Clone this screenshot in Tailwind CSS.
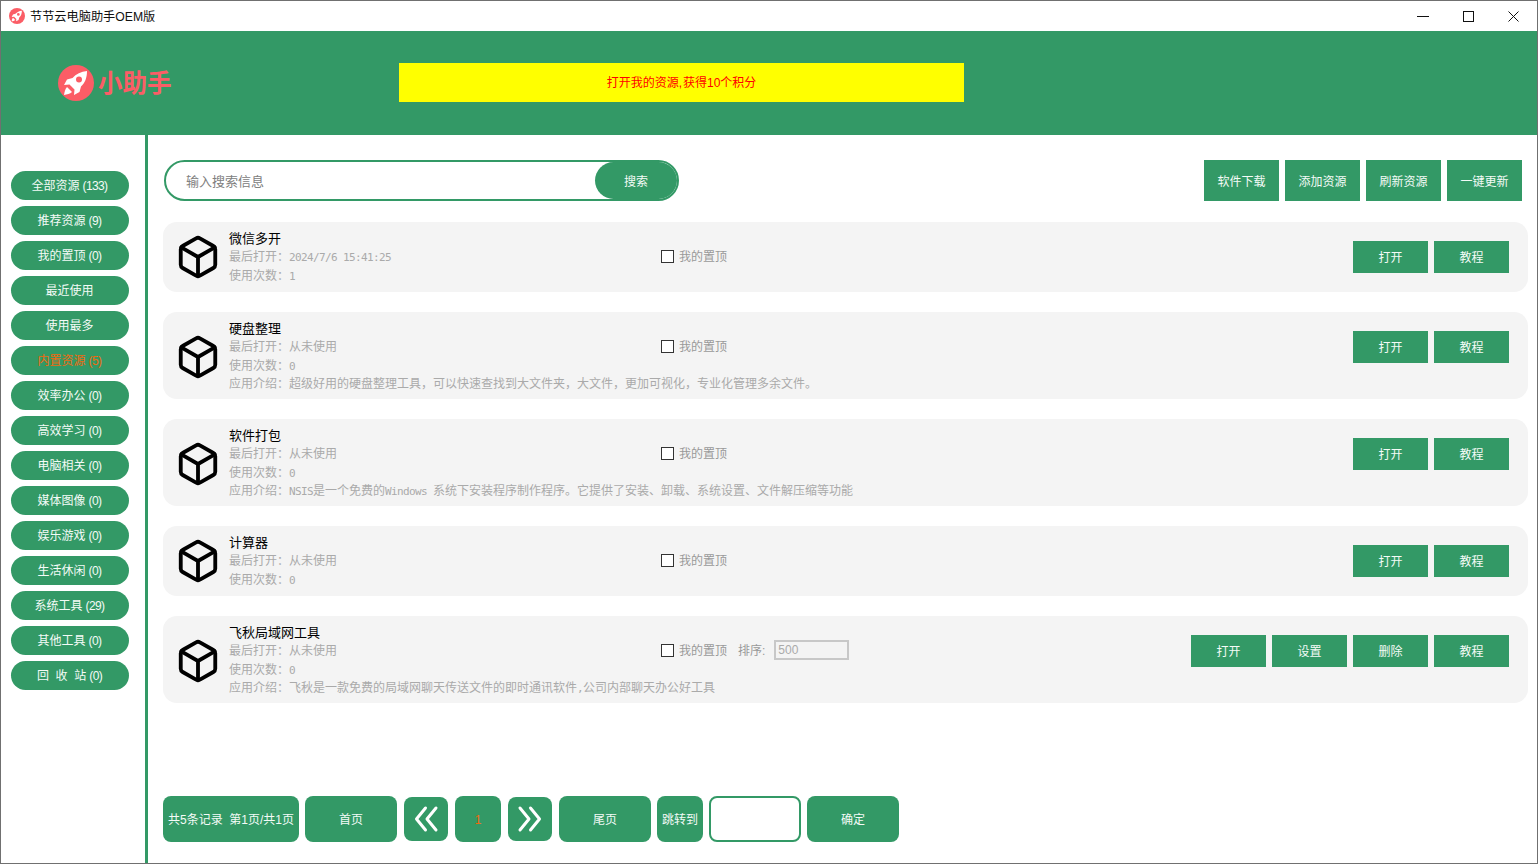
<!DOCTYPE html>
<html lang="zh">
<head>
<meta charset="utf-8">
<title>节节云电脑助手OEM版</title>
<script src="https://cdn.jsdelivr.net/npm/@tailwindcss/browser@4"></script>
</head>
<body class="bg-white">
<div class="w-[1538px] h-[864px] box-border border border-[#707070] flex flex-col overflow-hidden bg-white text-[12px] leading-[18px] font-['Liberation_Sans','Noto_Sans_CJK_SC',sans-serif]">

  <!-- title bar -->
  <div class="h-[30px] shrink-0 flex items-center pl-[8px] text-[#111]">
    <svg class="w-[16px] h-[16px] shrink-0" viewBox="0 0 36 36"><circle cx="18" cy="18" r="18" fill="#fb5d66"/><path d="M29 6C23 6.500 18 9 14.500 13L9 14.500 6 20 11.500 19.500 16.500 24.500 16 30 21.500 27 23 21.500C27 18 29 12.500 29 6Z" fill="#fff"/><circle cx="21" cy="14.500" r="3" fill="#fb5d66"/><path d="M9 22C7 24 6.500 27 6 30 9 29.500 12 29 14 27Z" fill="#fff"/></svg>
    <span class="ml-[5px] text-[12.200px] pt-[1px]">节节云电脑助手OEM版</span>
    <div class="ml-auto flex items-center pr-[18px] gap-[34px]">
      <svg class="w-[12px] h-[12px]" viewBox="0 0 12 12"><path d="M0 6.500H12" stroke="#111" stroke-width="1"/></svg>
      <svg class="w-[11px] h-[11px]" viewBox="0 0 11 11"><rect x=".5" y=".5" width="10" height="10" fill="none" stroke="#111"/></svg>
      <svg class="w-[11px] h-[11px]" viewBox="0 0 11 11"><path d="M.5.500 10.500 10.500M10.500.500.500 10.500" stroke="#111" stroke-width="1"/></svg>
    </div>
  </div>

  <!-- header -->
  <div class="h-[104px] shrink-0 bg-[#339966] flex items-center">
    <svg class="ml-[57px] w-[36px] h-[36px] shrink-0" viewBox="0 0 36 36"><circle cx="18" cy="18" r="18" fill="#fb5d66"/><path d="M29 6C23 6.500 18 9 14.500 13L9 14.500 6 20 11.500 19.500 16.500 24.500 16 30 21.500 27 23 21.500C27 18 29 12.500 29 6Z" fill="#fff"/><circle cx="21" cy="14.500" r="3" fill="#fb5d66"/><path d="M9 22C7 24 6.500 27 6 30 9 29.500 12 29 14 27Z" fill="#fff"/></svg>
    <span class="ml-[4px] w-[75px] text-[24.500px] leading-[30px] font-bold text-[#fb5d66] pt-[2px] whitespace-nowrap">小助手</span>
    <div class="ml-[226px] w-[565px] h-[39px] mb-[2px] pt-[2px] bg-[#ffff00] text-[#ff0000] flex items-center justify-center"><span>打开我的资源,<span class="ml-[1px]">获得10个积分</span></span></div>
  </div>

  <div class="flex flex-1 min-h-0">
    <!-- sidebar -->
    <div class="w-[147px] shrink-0 border-r-[3px] border-[#339966] pt-[36px] pl-[10px] flex flex-col gap-[6px] text-[#f4fbf7]">
      <div class="w-[118px] h-[29px] pr-[1px] shrink-0 rounded-[14.500px] bg-[#339966] flex items-center justify-center whitespace-pre">全部资源<span class="ml-[3px] tracking-[-0.600px]">(133)</span></div>
      <div class="w-[118px] h-[29px] pr-[1px] shrink-0 rounded-[14.500px] bg-[#339966] flex items-center justify-center whitespace-pre">推荐资源<span class="ml-[3px] tracking-[-0.600px]">(9)</span></div>
      <div class="w-[118px] h-[29px] pr-[1px] shrink-0 rounded-[14.500px] bg-[#339966] flex items-center justify-center whitespace-pre">我的置顶<span class="ml-[3px] tracking-[-0.600px]">(0)</span></div>
      <div class="w-[118px] h-[29px] pr-[1px] shrink-0 rounded-[14.500px] bg-[#339966] flex items-center justify-center">最近使用</div>
      <div class="w-[118px] h-[29px] pr-[1px] shrink-0 rounded-[14.500px] bg-[#339966] flex items-center justify-center">使用最多</div>
      <div class="w-[118px] h-[29px] pr-[1px] shrink-0 rounded-[14.500px] bg-[#339966] flex items-center justify-center whitespace-pre text-[#f06a10]">内置资源<span class="ml-[3px] tracking-[-0.600px]">(5)</span></div>
      <div class="w-[118px] h-[29px] pr-[1px] shrink-0 rounded-[14.500px] bg-[#339966] flex items-center justify-center whitespace-pre">效率办公<span class="ml-[3px] tracking-[-0.600px]">(0)</span></div>
      <div class="w-[118px] h-[29px] pr-[1px] shrink-0 rounded-[14.500px] bg-[#339966] flex items-center justify-center whitespace-pre">高效学习<span class="ml-[3px] tracking-[-0.600px]">(0)</span></div>
      <div class="w-[118px] h-[29px] pr-[1px] shrink-0 rounded-[14.500px] bg-[#339966] flex items-center justify-center whitespace-pre">电脑相关<span class="ml-[3px] tracking-[-0.600px]">(0)</span></div>
      <div class="w-[118px] h-[29px] pr-[1px] shrink-0 rounded-[14.500px] bg-[#339966] flex items-center justify-center whitespace-pre">媒体图像<span class="ml-[3px] tracking-[-0.600px]">(0)</span></div>
      <div class="w-[118px] h-[29px] pr-[1px] shrink-0 rounded-[14.500px] bg-[#339966] flex items-center justify-center whitespace-pre">娱乐游戏<span class="ml-[3px] tracking-[-0.600px]">(0)</span></div>
      <div class="w-[118px] h-[29px] pr-[1px] shrink-0 rounded-[14.500px] bg-[#339966] flex items-center justify-center whitespace-pre">生活休闲<span class="ml-[3px] tracking-[-0.600px]">(0)</span></div>
      <div class="w-[118px] h-[29px] pr-[1px] shrink-0 rounded-[14.500px] bg-[#339966] flex items-center justify-center whitespace-pre">系统工具<span class="ml-[3px] tracking-[-0.600px]">(29)</span></div>
      <div class="w-[118px] h-[29px] pr-[1px] shrink-0 rounded-[14.500px] bg-[#339966] flex items-center justify-center whitespace-pre">其他工具<span class="ml-[3px] tracking-[-0.600px]">(0)</span></div>
      <div class="w-[118px] h-[29px] pr-[1px] shrink-0 rounded-[14.500px] bg-[#339966] flex items-center justify-center whitespace-pre">回  收  站<span class="ml-[3px] tracking-[-0.600px]">(0)</span></div>
    </div>

    <!-- main -->
    <div class="flex-1 min-w-0 flex flex-col pt-[25px] pl-[15px] pr-[9px]">
      <!-- toolbar -->
      <div class="h-[41px] shrink-0 flex items-center pl-[1px] pr-[6px]">
        <div class="w-[515px] h-[41px] box-border border-2 border-[#339966] rounded-full flex items-center pl-[20px]">
          <span class="text-[13px] text-[#808080] flex-1 pt-[2px]">输入搜索信息</span>
          <div class="w-[82px] h-[37px] pt-[2px] bg-[#339966] rounded-full text-[#f4fbf7] flex items-center justify-center">搜索</div>
        </div>
        <div class="ml-auto flex gap-[6px] text-[#f4fbf7]">
          <div class="w-[75px] h-[41px] pt-[2px] bg-[#339966] flex items-center justify-center">软件下载</div>
          <div class="w-[75px] h-[41px] pt-[2px] bg-[#339966] flex items-center justify-center">添加资源</div>
          <div class="w-[75px] h-[41px] pt-[2px] bg-[#339966] flex items-center justify-center">刷新资源</div>
          <div class="w-[75px] h-[41px] pt-[2px] bg-[#339966] flex items-center justify-center">一键更新</div>
        </div>
      </div>

      <!-- rows -->
      <div class="mt-[21px] flex flex-col gap-[20px] text-[#aaaaaa]">

        <div class="h-[70px] rounded-[14px] bg-[#f4f4f4] pt-[7.500px] pb-[6.500px] pr-[19px] grid grid-cols-[66px_432px_1fr_auto] grid-rows-[repeat(3,18.500px)]">
          <svg class="row-span-3 self-center ml-[12px] w-[46px] h-[46px]" viewBox="0 0 24 24" fill="none" stroke="#000" stroke-width="2" stroke-linecap="round" stroke-linejoin="round"><path d="M21 16V8a2 2 0 0 0-1-1.730l-7-4a2 2 0 0 0-2 0l-7 4A2 2 0 0 0 3 8v8a2 2 0 0 0 1 1.730l7 4a2 2 0 0 0 2 0l7-4A2 2 0 0 0 21 16z"/><path d="M3.270 6.960 12 12.010l8.730-5.050M12 22.080V12"/></svg>
          <div class="col-span-3 text-[13px] leading-[18.500px] text-black">微信多开</div>
          <div class="leading-[18.500px]">最后打开：<span class="font-['DejaVu_Sans_Mono'] text-[11px] tracking-[-0.620px]">2024/7/6 15:41:25</span></div>
          <div class="flex items-center text-[#999999] leading-[18.500px]"><span class="w-[13px] h-[13px] mb-[2px] border border-[#333] bg-white mr-[5px]"></span>我的置顶</div>
          <div class="flex gap-[6px] items-center h-[32px] -my-[6.750px] text-[#f4fbf7]"><div class="w-[75px] h-[32px] pt-[2px] bg-[#339966] flex items-center justify-center">打开</div><div class="w-[75px] h-[32px] pt-[2px] bg-[#339966] flex items-center justify-center">教程</div></div>
          <div class="col-start-2 col-span-3 leading-[18.500px]">使用次数：<span class="font-['DejaVu_Sans_Mono'] text-[11px] tracking-[-0.620px]">1</span></div>
        </div>

        <div class="h-[87px] rounded-[14px] bg-[#f4f4f4] pt-[7.500px] pb-[5.500px] pr-[19px] grid grid-cols-[66px_432px_1fr_auto] grid-rows-[repeat(4,18.500px)]">
          <svg class="row-span-4 self-center ml-[12px] w-[46px] h-[46px]" viewBox="0 0 24 24" fill="none" stroke="#000" stroke-width="2" stroke-linecap="round" stroke-linejoin="round"><path d="M21 16V8a2 2 0 0 0-1-1.730l-7-4a2 2 0 0 0-2 0l-7 4A2 2 0 0 0 3 8v8a2 2 0 0 0 1 1.730l7 4a2 2 0 0 0 2 0l7-4A2 2 0 0 0 21 16z"/><path d="M3.270 6.960 12 12.010l8.730-5.050M12 22.080V12"/></svg>
          <div class="col-span-3 text-[13px] leading-[18.500px] text-black">硬盘整理</div>
          <div class="leading-[18.500px]">最后打开：从未使用</div>
          <div class="flex items-center text-[#999999] leading-[18.500px]"><span class="w-[13px] h-[13px] mb-[2px] border border-[#333] bg-white mr-[5px]"></span>我的置顶</div>
          <div class="flex gap-[6px] items-center h-[32px] -my-[6.750px] text-[#f4fbf7]"><div class="w-[75px] h-[32px] pt-[2px] bg-[#339966] flex items-center justify-center">打开</div><div class="w-[75px] h-[32px] pt-[2px] bg-[#339966] flex items-center justify-center">教程</div></div>
          <div class="col-start-2 col-span-3 leading-[18.500px]">使用次数：<span class="font-['DejaVu_Sans_Mono'] text-[11px] tracking-[-0.620px]">0</span></div>
          <div class="col-start-2 col-span-3 leading-[18.500px]">应用介绍：超级好用的硬盘整理工具，可以快速查找到大文件夹，大文件，更加可视化，专业化管理多余文件。</div>
        </div>

        <div class="h-[87px] rounded-[14px] bg-[#f4f4f4] pt-[7.500px] pb-[5.500px] pr-[19px] grid grid-cols-[66px_432px_1fr_auto] grid-rows-[repeat(4,18.500px)]">
          <svg class="row-span-4 self-center ml-[12px] w-[46px] h-[46px]" viewBox="0 0 24 24" fill="none" stroke="#000" stroke-width="2" stroke-linecap="round" stroke-linejoin="round"><path d="M21 16V8a2 2 0 0 0-1-1.730l-7-4a2 2 0 0 0-2 0l-7 4A2 2 0 0 0 3 8v8a2 2 0 0 0 1 1.730l7 4a2 2 0 0 0 2 0l7-4A2 2 0 0 0 21 16z"/><path d="M3.270 6.960 12 12.010l8.730-5.050M12 22.080V12"/></svg>
          <div class="col-span-3 text-[13px] leading-[18.500px] text-black">软件打包</div>
          <div class="leading-[18.500px]">最后打开：从未使用</div>
          <div class="flex items-center text-[#999999] leading-[18.500px]"><span class="w-[13px] h-[13px] mb-[2px] border border-[#333] bg-white mr-[5px]"></span>我的置顶</div>
          <div class="flex gap-[6px] items-center h-[32px] -my-[6.750px] text-[#f4fbf7]"><div class="w-[75px] h-[32px] pt-[2px] bg-[#339966] flex items-center justify-center">打开</div><div class="w-[75px] h-[32px] pt-[2px] bg-[#339966] flex items-center justify-center">教程</div></div>
          <div class="col-start-2 col-span-3 leading-[18.500px]">使用次数：<span class="font-['DejaVu_Sans_Mono'] text-[11px] tracking-[-0.620px]">0</span></div>
          <div class="col-start-2 col-span-3 leading-[18.500px]">应用介绍：<span class="font-['DejaVu_Sans_Mono'] text-[11px] tracking-[-0.620px]">NSIS</span>是一个免费的<span class="font-['DejaVu_Sans_Mono'] text-[11px] tracking-[-0.620px] whitespace-pre">Windows </span>系统下安装程序制作程序。它提供了安装、卸载、系统设置、文件解压缩等功能</div>
        </div>

        <div class="h-[70px] rounded-[14px] bg-[#f4f4f4] pt-[7.500px] pb-[6.500px] pr-[19px] grid grid-cols-[66px_432px_1fr_auto] grid-rows-[repeat(3,18.500px)]">
          <svg class="row-span-3 self-center ml-[12px] w-[46px] h-[46px]" viewBox="0 0 24 24" fill="none" stroke="#000" stroke-width="2" stroke-linecap="round" stroke-linejoin="round"><path d="M21 16V8a2 2 0 0 0-1-1.730l-7-4a2 2 0 0 0-2 0l-7 4A2 2 0 0 0 3 8v8a2 2 0 0 0 1 1.730l7 4a2 2 0 0 0 2 0l7-4A2 2 0 0 0 21 16z"/><path d="M3.270 6.960 12 12.010l8.730-5.050M12 22.080V12"/></svg>
          <div class="col-span-3 text-[13px] leading-[18.500px] text-black">计算器</div>
          <div class="leading-[18.500px]">最后打开：从未使用</div>
          <div class="flex items-center text-[#999999] leading-[18.500px]"><span class="w-[13px] h-[13px] mb-[2px] border border-[#333] bg-white mr-[5px]"></span>我的置顶</div>
          <div class="flex gap-[6px] items-center h-[32px] -my-[6.750px] text-[#f4fbf7]"><div class="w-[75px] h-[32px] pt-[2px] bg-[#339966] flex items-center justify-center">打开</div><div class="w-[75px] h-[32px] pt-[2px] bg-[#339966] flex items-center justify-center">教程</div></div>
          <div class="col-start-2 col-span-3 leading-[18.500px]">使用次数：<span class="font-['DejaVu_Sans_Mono'] text-[11px] tracking-[-0.620px]">0</span></div>
        </div>

        <div class="h-[87px] rounded-[14px] bg-[#f4f4f4] pt-[7.500px] pb-[5.500px] pr-[19px] grid grid-cols-[66px_432px_1fr_auto] grid-rows-[repeat(4,18.500px)]">
          <svg class="row-span-4 self-center ml-[12px] w-[46px] h-[46px]" viewBox="0 0 24 24" fill="none" stroke="#000" stroke-width="2" stroke-linecap="round" stroke-linejoin="round"><path d="M21 16V8a2 2 0 0 0-1-1.730l-7-4a2 2 0 0 0-2 0l-7 4A2 2 0 0 0 3 8v8a2 2 0 0 0 1 1.730l7 4a2 2 0 0 0 2 0l7-4A2 2 0 0 0 21 16z"/><path d="M3.270 6.960 12 12.010l8.730-5.050M12 22.080V12"/></svg>
          <div class="col-span-3 text-[13px] leading-[18.500px] text-black">飞秋局域网工具</div>
          <div class="leading-[18.500px]">最后打开：从未使用</div>
          <div class="flex items-center text-[#999999] leading-[18.500px]"><span class="w-[13px] h-[13px] mb-[2px] border border-[#333] bg-white mr-[5px]"></span>我的置顶<span class="ml-[11px]">排序:</span><span class="ml-[9px] mb-[2px] w-[75px] h-[20px] box-border border-2 border-[#c8c8c8] pl-[2px] leading-[16px] text-[#aaaaaa]">500</span></div>
          <div class="flex gap-[6px] items-center h-[32px] -my-[6.750px] text-[#f4fbf7]"><div class="w-[75px] h-[32px] pt-[2px] bg-[#339966] flex items-center justify-center">打开</div><div class="w-[75px] h-[32px] pt-[2px] bg-[#339966] flex items-center justify-center">设置</div><div class="w-[75px] h-[32px] pt-[2px] bg-[#339966] flex items-center justify-center">删除</div><div class="w-[75px] h-[32px] pt-[2px] bg-[#339966] flex items-center justify-center">教程</div></div>
          <div class="col-start-2 col-span-3 leading-[18.500px]">使用次数：<span class="font-['DejaVu_Sans_Mono'] text-[11px] tracking-[-0.620px]">0</span></div>
          <div class="col-start-2 col-span-3 leading-[18.500px]">应用介绍：飞秋是一款免费的局域网聊天传送文件的即时通讯软件<span class="font-['DejaVu_Sans_Mono'] text-[11px] tracking-[-0.620px]">,</span>公司内部聊天办公好工具</div>
        </div>
      </div>

      <!-- pagination -->
      <div class="mt-auto mb-[21px] flex items-center gap-[6px] text-[#f4fbf7]">
        <div class="w-[136px] h-[46px] pt-[1px] rounded-[8px] bg-[#339966] flex items-center justify-center whitespace-pre">共5条记录  第1页/共1页</div>
        <div class="w-[92px] h-[46px] pt-[1px] rounded-[8px] bg-[#339966] flex items-center justify-center">首页</div>
        <div class="ml-[1px] w-[44px] h-[44px] rounded-[8px] bg-[#339966] flex items-center justify-center"><svg class="w-[26px] h-[28px]" viewBox="0 0 26 28" fill="none" stroke="#fff" stroke-width="3" stroke-linecap="round" stroke-linejoin="round"><path d="M12.500 3 3.500 14l9 11M23 3l-9 11 9 11"/></svg></div>
        <div class="ml-[1px] w-[46px] h-[46px] pt-[1px] rounded-[8px] bg-[#339966] flex items-center justify-center text-[#f06a10]">1</div>
        <div class="ml-[1px] w-[44px] h-[44px] rounded-[8px] bg-[#339966] flex items-center justify-center"><svg class="w-[26px] h-[28px]" viewBox="0 0 26 28" fill="none" stroke="#fff" stroke-width="3" stroke-linecap="round" stroke-linejoin="round"><path d="m3 3 9 11-9 11M13.500 3l9 11-9 11"/></svg></div>
        <div class="ml-[1px] w-[92px] h-[46px] pt-[1px] rounded-[8px] bg-[#339966] flex items-center justify-center">尾页</div>
        <div class="w-[46px] h-[46px] pt-[1px] rounded-[8px] bg-[#339966] flex items-center justify-center">跳转到</div>
        <div class="w-[92px] h-[46px] box-border rounded-[8px] border-2 border-[#339966] bg-white"></div>
        <div class="w-[92px] h-[46px] pt-[1px] rounded-[8px] bg-[#339966] flex items-center justify-center">确定</div>
      </div>
    </div>
  </div>
</div>
</body>
</html>
